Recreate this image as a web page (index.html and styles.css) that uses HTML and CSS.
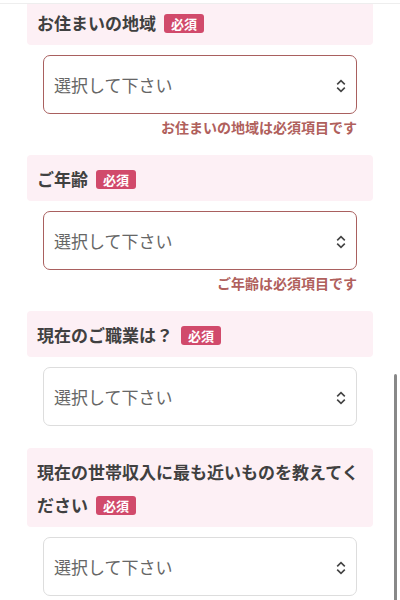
FILE: index.html
```html
<!DOCTYPE html>
<html lang="ja">
<head>
	<meta charset="UTF-8">
	<title>アンケート</title>
	<link rel="stylesheet" href="styles.css">
</head>
<body>

	<div class="top-bar"></div>

	<form class="form">

		<div class="field">
			<div class="field-head"><span class="label">お住まいの地域</span><span class="badge">必須</span></div>
			<div class="select select-error">
				<span>選択して下さい</span>
				<svg class="chevron" viewBox="0 0 10 14" width="10" height="14"><path d="M1.2 5.4 5 1.6 8.8 5.4M1.2 8.6 5 12.4 8.8 8.6"/></svg>
			</div>
			<p class="error">お住まいの地域は必須項目です</p>
		</div>

		<div class="field">
			<div class="field-head"><span class="label">ご年齢</span><span class="badge">必須</span></div>
			<div class="select select-error">
				<span>選択して下さい</span>
				<svg class="chevron" viewBox="0 0 10 14" width="10" height="14"><path d="M1.2 5.4 5 1.6 8.8 5.4M1.2 8.6 5 12.4 8.8 8.6"/></svg>
			</div>
			<p class="error">ご年齢は必須項目です</p>
		</div>

		<div class="field">
			<div class="field-head"><span class="label">現在のご職業は？</span><span class="badge">必須</span></div>
			<div class="select">
				<span>選択して下さい</span>
				<svg class="chevron" viewBox="0 0 10 14" width="10" height="14"><path d="M1.2 5.4 5 1.6 8.8 5.4M1.2 8.6 5 12.4 8.8 8.6"/></svg>
			</div>
		</div>

		<div class="field">
			<div class="field-head"><span class="label">現在の世帯収入に最も近いものを教えてください</span><span class="badge">必須</span></div>
			<div class="select">
				<span>選択して下さい</span>
				<svg class="chevron" viewBox="0 0 10 14" width="10" height="14"><path d="M1.2 5.4 5 1.6 8.8 5.4M1.2 8.6 5 12.4 8.8 8.6"/></svg>
			</div>
		</div>

	</form>

	<div class="scroll-thumb"></div>

</body>
</html>
```

FILE: styles.css
```css
body {
	margin: 0;
	background: #fff;
	color: #444;
	font-family: "Noto Sans CJK JP", "Noto Sans", sans-serif;
	overflow: hidden;
}
.top-bar {
	position: fixed;
	top: 0;
	left: 0;
	right: 0;
	height: 3px;
	background: #fff;
	border-bottom: 1px solid #eee;
	z-index: 2;
}
.form {
	margin: -1px 27px 0;
}
.field { margin-bottom: 22px }
.field-head {
	background: #fdf0f5;
	border-radius: 4px;
	padding: 7px 10px 6px;
	font-size: 17px;
	font-weight: bold;
	line-height: 33px;
	color: #404040;
}
.badge {
	display: inline-block;
	vertical-align: 1px;
	margin-left: 8px;
	padding: 0 7px;
	height: 19px;
	line-height: 19px;
	border-radius: 3px;
	background: #d14a6b;
	color: #fff;
	font-size: 13px;
	font-weight: bold;
}
.select {
	display: flex;
	align-items: center;
	justify-content: space-between;
	box-sizing: border-box;
	height: 59px;
	margin: 10px 16px 0;
	padding: 0 10px;
	border: 1px solid #ddd;
	border-radius: 7px;
	background: #fff;
	font-size: 17px;
	color: #666;
}
.select-error { border-color: #a9605f }
.chevron {
	fill: none;
	stroke: #444;
	stroke-width: 1.6;
	margin-top: 2px;
}
.error {
	margin: 4px 16px -3px;
	text-align: right;
	font-size: 14px;
	font-weight: bold;
	line-height: 18px;
	color: #b0605c;
}
.scroll-thumb {
	position: fixed;
	right: 3px;
	top: 374px;
	bottom: 0;
	width: 3px;
	border-radius: 2px 2px 0 0;
	background: #888;
}
```
